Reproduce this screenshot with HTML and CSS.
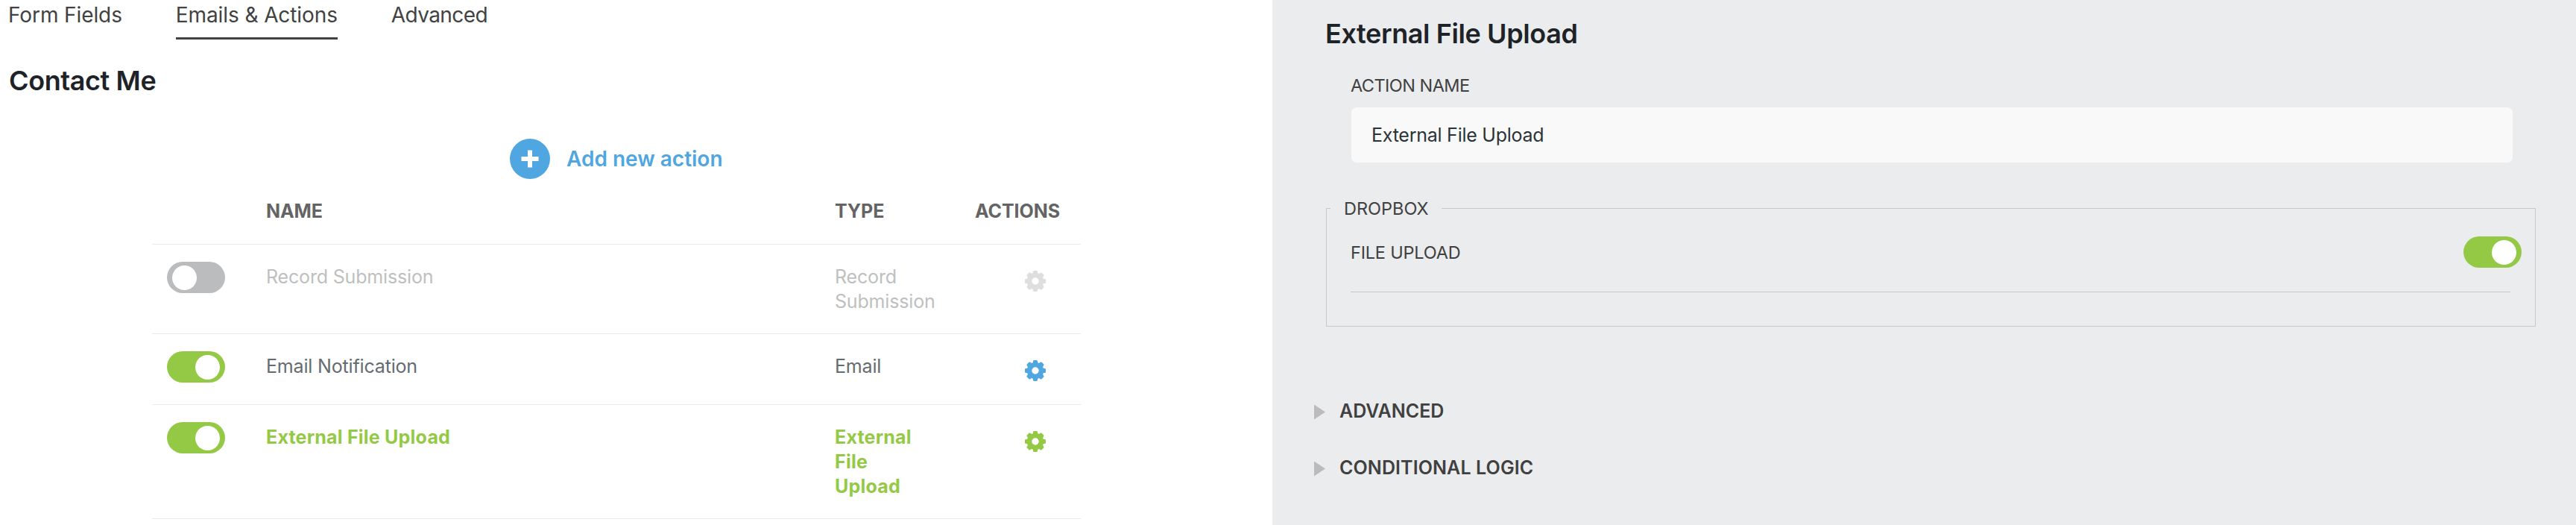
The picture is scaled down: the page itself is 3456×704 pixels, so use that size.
FILE: index.html
```
<!DOCTYPE html>
<html lang="en">
<head>
    <meta charset="UTF-8">
    <meta name="viewport" content="width=device-width, initial-scale=1.0">
    <title>Contact Me | Emails & Actions</title>
    <link rel="stylesheet" href="styles.css">
</head>
<body>
    <!-- Gear shape shared by the action rows -->
    <svg class="sprite" width="0" height="0">
        <symbol id="gear" viewBox="-14 -14 28 28">
            <path fill-rule="evenodd" d="M-2.8 -13.2Q-2.7 -14 -1.9 -14H1.9Q2.7 -14 2.8 -13.2L3.3 -10.8L4.9 -10.1L7.2 -11.4Q8 -11.8 8.6 -11.2L11.2 -8.6Q11.8 -8 11.4 -7.2L10.1 -4.9L10.8 -3.3L13.2 -2.8Q14 -2.7 14 -1.9V1.9Q14 2.7 13.2 2.8L10.8 3.3L10.1 4.9L11.4 7.2Q11.8 8 11.2 8.6L8.6 11.2Q8 11.8 7.2 11.4L4.9 10.1L3.3 10.8L2.8 13.2Q2.7 14 1.9 14H-1.9Q-2.7 14 -2.8 13.2L-3.3 10.8L-4.9 10.1L-7.2 11.4Q-8 11.8 -8.6 11.2L-11.2 8.6Q-11.8 8 -11.4 7.2L-10.1 4.9L-10.8 3.3L-13.2 2.8Q-14 2.7 -14 1.9V-1.9Q-14 -2.7 -13.2 -2.8L-10.8 -3.3L-10.1 -4.9L-11.4 -7.2Q-11.8 -8 -11.2 -8.6L-8.6 -11.2Q-8 -11.8 -7.2 -11.4L-4.9 -10.1L-3.3 -10.8ZM4.7 0A4.7 4.7 0 1 0 -4.7 0A4.7 4.7 0 1 0 4.7 0Z"/>
        </symbol>
    </svg>

    <main class="main-content">
        <nav class="tabs">
            <a class="tab">Form Fields</a>
            <a class="tab active">Emails &amp; Actions</a>
            <a class="tab tab-advanced">Advanced</a>
        </nav>

        <h2 class="form-title">Contact Me</h2>

        <div class="add-action">
            <span class="add-icon">
                <svg width="24" height="24" viewBox="0 0 24 24"><path d="M12 3.5V20.5M3.5 12H20.5" stroke="#fff" stroke-width="6" stroke-linecap="square"/></svg>
            </span>
            <span class="add-label">Add new action</span>
        </div>

        <div class="action-table">
            <div class="row head">
                <span></span>
                <span>NAME</span>
                <span>TYPE</span>
                <span class="head-actions">ACTIONS</span>
            </div>
            <div class="row disabled">
                <span class="toggle"></span>
                <span class="name">Record Submission</span>
                <span class="type">Record Submission</span>
                <svg class="gear"><use href="#gear"/></svg>
            </div>
            <div class="row">
                <span class="toggle on"></span>
                <span class="name">Email Notification</span>
                <span class="type">Email</span>
                <svg class="gear"><use href="#gear"/></svg>
            </div>
            <div class="row selected">
                <span class="toggle on"></span>
                <span class="name">External File Upload</span>
                <span class="type">External File Upload</span>
                <svg class="gear"><use href="#gear"/></svg>
            </div>
        </div>
    </main>

    <aside class="drawer">
        <h2 class="drawer-title">External File Upload</h2>

        <div class="setting">
            <label class="label-name" for="action-name">ACTION NAME</label>
            <input type="text" id="action-name" value="External File Upload">
        </div>

        <fieldset>
            <legend>DROPBOX</legend>
            <div class="setting-toggle">
                <span class="label-upload">FILE UPLOAD</span>
                <span class="toggle on"></span>
            </div>
            <hr>
        </fieldset>

        <div class="section"><span class="arrow"></span><span>ADVANCED</span></div>
        <div class="section"><span class="arrow"></span><span class="label-logic">CONDITIONAL LOGIC</span></div>
    </aside>
</body>
</html>
```
FILE: styles.css
```
* {
    box-sizing: border-box;
}

body {
    display: flex;
    height: 704px;
    margin: 0;
    font-family: Inter, "Open Sans", sans-serif;
    background: #fff;
    overflow: hidden;
}

.sprite {
    position: absolute;
}

.main-content {
    width: 1707px;
}

/* Tabs */
.tabs {
    display: flex;
    gap: 72px;
    padding-left: 11px;
}

.tab {
    padding: 4px 0 14px;
    font-size: 28px;
    line-height: 32px;
    letter-spacing: -0.1px;
    color: #424242;
    border-bottom: 3px solid transparent;
}

.tab.active {
    border-bottom-color: #424242;
}

.tab-advanced {
    letter-spacing: -0.6px;
}

h2 {
    margin: 0;
    font-size: 36px;
    font-weight: 600;
    line-height: 44px;
    color: #1d2327;
}

.form-title {
    padding: 33px 0 0 12px;
    letter-spacing: -0.4px;
}

/* Add new action */
.add-action {
    display: flex;
    align-items: center;
    gap: 22px;
    margin: 56px 0 0 684px;
}

.add-icon {
    display: flex;
    align-items: center;
    justify-content: center;
    width: 54px;
    height: 54px;
    border-radius: 50%;
    background: #50a6e1;
}

.add-label {
    font-size: 28px;
    font-weight: 600;
    color: #50a6e1;
}

/* Action table */
.action-table {
    width: 1246px;
    margin-left: 204px;
}

.row {
    display: grid;
    grid-template-columns: 153px 763px 189px 141px;
    align-items: start;
    padding: 27px 0 26px;
    min-height: 95px;
    border-bottom: 1px solid #ebebeb;
    font-size: 25px;
    line-height: 33px;
    color: #646b71;
}

.row.head {
    height: 88px;
    min-height: 0;
    font-weight: 700;
    letter-spacing: -0.08px;
    color: #646464;
}

.head-actions {
    margin-left: -1px;
}

.row .toggle {
    margin: -4px 0 0 20px;
}

.name,
.type {
    letter-spacing: -0.17px;
}

.type {
    padding-right: 57px;
}

.gear {
    width: 28px;
    height: 28px;
    margin: 8px 0 0 66px;
    fill: #50a6e1;
}

.disabled {
    color: #bebfc0;
}

.disabled .gear {
    fill: #dedede;
}

.selected {
    color: #94c945;
    font-weight: 700;
}

.selected .name,
.selected .type {
    letter-spacing: 0.22px;
}

.selected .gear {
    fill: #94c945;
}

/* Toggle switch */
.toggle {
    display: flex;
    align-items: center;
    width: 78px;
    height: 42px;
    padding: 0 7px;
    border-radius: 21px;
    background: #bbbcbe;
}

.toggle::before {
    content: "";
    width: 33px;
    height: 33px;
    border-radius: 50%;
    background: #fff;
}

.toggle.on {
    justify-content: flex-end;
    background: #94c945;
}

/* Drawer */
.drawer {
    flex: 1;
    padding: 23px 54px 0 56px;
    background: #ebecee;
}

.drawer-title {
    padding-left: 15px;
    letter-spacing: -0.4px;
}

.setting {
    margin: 33px 31px 0 50px;
}

.setting label {
    display: block;
    margin-left: -1px;
    font-size: 23.5px;
    line-height: 30px;
    color: #404040;
}

.label-name {
    letter-spacing: -0.55px;
}

.setting input {
    display: block;
    width: 100%;
    height: 74px;
    margin-top: 14px;
    padding: 0 27px;
    border: none;
    border-radius: 7px;
    background: #f9f9f9;
    font-family: inherit;
    font-size: 25px;
    letter-spacing: -0.25px;
    color: #2c3338;
}

fieldset {
    height: 174px;
    margin: 46px 0 0 16px;
    padding: 23px 18px 0 5px;
    border: 1px solid #c7c8ca;
    min-width: 0;
}

legend {
    width: 149px;
    height: 30px;
    padding: 0 0 0 18px;
    font-size: 23.5px;
    line-height: 32px;
    color: #404040;
}

.setting-toggle {
    display: flex;
    align-items: center;
    justify-content: space-between;
    padding-left: 27px;
}

.label-upload {
    font-size: 23.5px;
    letter-spacing: -0.2px;
    color: #404040;
}

hr {
    height: 1px;
    margin: 32px 15px 0 27px;
    border: none;
    background: #c7c8ca;
}

/* Collapsed sections */
.section {
    display: flex;
    align-items: center;
    gap: 19px;
    margin-top: 44px;
    height: 32px;
    font-size: 25px;
    font-weight: 600;
    color: #404040;
}

fieldset + .section {
    margin-top: 97px;
}

.label-logic {
    letter-spacing: 0.1px;
}

.arrow {
    width: 15px;
    height: 20px;
    margin-top: 3px;
    background: #bbb;
    clip-path: polygon(0 0, 100% 50%, 0 100%);
}
```
